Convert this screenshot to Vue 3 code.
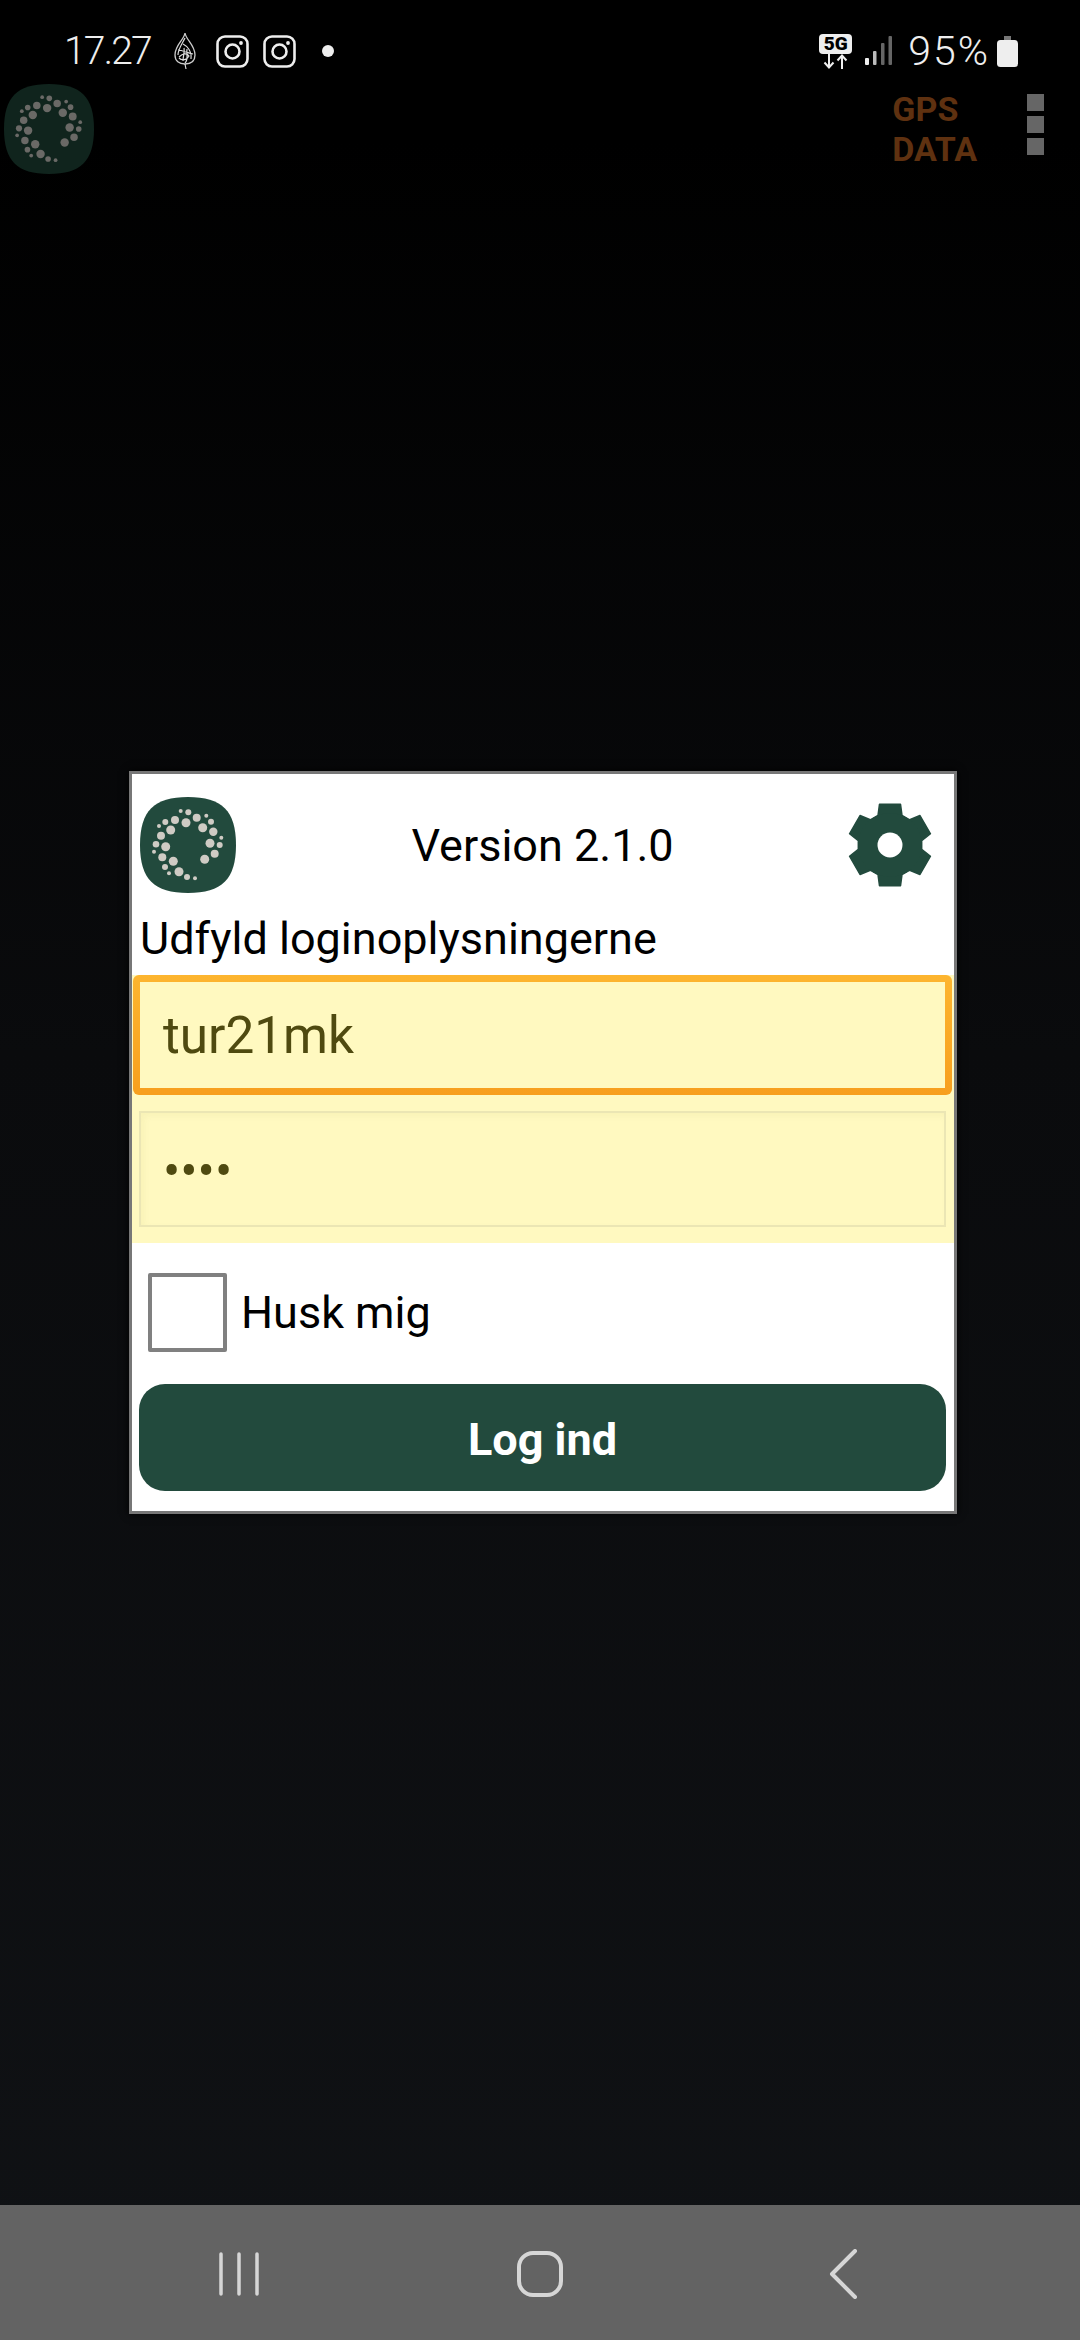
<script setup>
const username = 'tur21mk'
const password = 'test'

// dots of the app logo, in a 96x96 box
const logoDots = [
  [40.7, 14, 2], [48.3, 15.3, 3], [56.7, 20.7, 4], [66.3, 18.7, 2], [71, 24.7, 3],
  [62.7, 30.7, 4.5], [73.3, 34.7, 4.2], [81.3, 40.7, 2], [70, 46.3, 4.5], [79.7, 48, 3],
  [74.7, 56.7, 4], [64.7, 62.3, 4.5], [46, 25.7, 4.5], [35, 23, 4], [25.3, 25, 3],
  [19, 29, 2], [30.7, 33, 4.5], [21, 38.7, 4], [25.7, 49.7, 4.5], [16, 47.3, 3.3],
  [14, 54.7, 2], [22.3, 60.3, 4], [33.3, 64.3, 4.5], [25, 70, 3], [29, 76.3, 2],
  [39, 74.7, 4.5], [47, 80, 3], [55, 81.3, 2],
]

const squircle = 'M48 0C82 0 96 14 96 48C96 82 82 96 48 96C14 96 0 82 0 48C0 14 14 0 48 0Z'

function polar(r, deg) {
  const a = ((deg - 90) * Math.PI) / 180
  return `${(r * Math.cos(a)).toFixed(2)} ${(r * Math.sin(a)).toFixed(2)}`
}

// six-tooth gear around 0,0
const gearPath = (() => {
  let d = ''
  for (let i = 0; i < 6; i++) {
    const c = i * 60
    d += `${i === 0 ? 'M' : 'L'}${polar(32, c - 22)} L${polar(42, c - 14.5)} L${polar(42, c + 14.5)} L${polar(32, c + 22)} `
  }
  return d + 'Z'
})()
</script>

<template>
  <div class="screen">
    <header class="status-bar">
      <div class="status-left">
        <span class="clock">17.27</span>
        <svg class="jazeera" width="24" height="38" viewBox="0 0 24 38">
          <path d="M12 1C13 8 22 13 22 23C22 29 18 32 12 32C6 32 2 29 2 23C2 13 11 8 12 1Z" fill="none" stroke="#ccc" stroke-width="1.3" />
          <path d="M12 6C9 12 5 17 5 23M10 12C14 14 19 19 18 27M6 25C10 21 14 21 16 24C14 28 9 29 6 26M11 16C12 20 10 24 10 29M14 17C13 22 16 27 12 31M12 32L13 37M5 18C9 18 15 21 20 22" fill="none" stroke="#ddd" stroke-width="1.2" />
        </svg>
        <svg v-for="n in 2" :key="n" class="insta" width="33" height="33" viewBox="0 0 33 33">
          <rect x="1.5" y="1.5" width="30" height="30" rx="7.5" fill="none" stroke="#eee" stroke-width="2.6" />
          <circle cx="16.5" cy="16.5" r="7" fill="none" stroke="#eee" stroke-width="2.6" />
          <circle cx="25" cy="8" r="1.9" fill="#eee" />
        </svg>
        <span class="notif-dot"></span>
      </div>
      <div class="status-right">
        <div class="net">
          <span class="net-badge">5G</span>
          <svg width="26" height="15" viewBox="0 0 26 15">
            <path d="M6 0V13M1.5 8.5L6 13.5L10.5 8.5M19 15V2M14.5 6.5L19 1.5L23.5 6.5" fill="none" stroke="#eee" stroke-width="2" />
          </svg>
        </div>
        <svg class="signal" width="28" height="30" viewBox="0 0 28 30">
          <rect x="0" y="22" width="4" height="7" rx="1" fill="#eee" />
          <rect x="8" y="15" width="3.5" height="14" rx="1" fill="#bbb" />
          <rect x="16" y="7" width="3.5" height="22" rx="1" fill="#666" />
          <rect x="23.5" y="0" width="3.5" height="29" rx="1" fill="#666" />
        </svg>
        <span class="battery-text">95%</span>
        <svg width="21" height="31" viewBox="0 0 21 31">
          <path d="M7 0H14V4H7Z" fill="#777" />
          <rect x="0" y="4" width="21" height="27" rx="3.5" fill="#eee" />
        </svg>
      </div>
    </header>

    <div class="app-bar">
      <svg class="app-logo" width="90" height="90" viewBox="0 0 96 96">
        <path :d="squircle" fill="#10241d" />
        <circle v-for="(dot, i) in logoDots" :key="i" :cx="dot[0]" :cy="dot[1]" :r="dot[2]" fill="#6a6966" />
      </svg>
      <div class="gps-label">GPS<br />DATA</div>
      <div class="menu-dots">
        <span></span>
        <span></span>
        <span></span>
      </div>
    </div>

    <main class="content">
      <section class="dialog">
        <div class="dialog-head">
          <svg class="dialog-logo" width="96" height="96" viewBox="0 0 96 96">
            <path :d="squircle" fill="#224a3d" />
            <circle v-for="(dot, i) in logoDots" :key="i" :cx="dot[0]" :cy="dot[1]" :r="dot[2]" fill="#cfcbc4" />
          </svg>
          <div class="version">Version 2.1.0</div>
          <svg class="gear" width="86" height="86" viewBox="-43 -43 86 86">
            <path :d="gearPath" fill="#224a3d" stroke="#224a3d" stroke-width="1.5" stroke-linejoin="round" />
            <circle cx="0" cy="0" r="32" fill="#224a3d" />
            <circle cx="0" cy="0" r="12.5" fill="#fff" />
          </svg>
        </div>
        <div class="prompt">Udfyld loginoplysningerne</div>
        <div class="fields">
          <input class="field field-active" type="text" :value="username" readonly />
          <input class="field field-plain" type="password" :value="password" readonly />
        </div>
        <label class="remember">
          <span class="checkbox"></span>
          <span>Husk mig</span>
        </label>
        <button class="login-btn">Log ind</button>
      </section>
    </main>

    <nav class="nav-bar">
      <svg class="nav-recent" width="40" height="44" viewBox="0 0 40 44">
        <path d="M2 2V42M20 2V42M38 2V42" fill="none" stroke="#d6d6d6" stroke-width="3.5" stroke-linecap="round" />
      </svg>
      <svg class="nav-home" width="46" height="46" viewBox="0 0 46 46">
        <rect x="2" y="2" width="42" height="42" rx="14" fill="none" stroke="#d6d6d6" stroke-width="4" />
      </svg>
      <svg class="nav-back" width="30" height="50" viewBox="0 0 30 50">
        <path d="M26 2L3 25L26 48" fill="none" stroke="#d6d6d6" stroke-width="4" stroke-linecap="round" stroke-linejoin="round" />
      </svg>
    </nav>
  </div>
</template>

<style scoped>
.screen {
  width: 1080px;
  height: 2340px;
  display: flex;
  flex-direction: column;
  background: linear-gradient(180deg, #000000 0%, #000000 6%, #0a0b0d 45%, #101215 100%);
  font-family: Roboto, "Liberation Sans", sans-serif;
  color: #000;
  overflow: hidden;
}

.status-bar {
  height: 84px;
  padding: 30px 62px 0 64px;
  box-sizing: border-box;
  display: flex;
  justify-content: space-between;
  align-items: flex-start;
  color: #eee;
}

.status-left,
.status-right {
  display: flex;
  align-items: center;
  height: 42px;
}

.clock {
  font-size: 39px;
  font-weight: 300;
  letter-spacing: -1.8px;
  margin-right: 22px;
}

.jazeera {
  margin-right: 19px;
}

.insta {
  margin-right: 14px;
}

.notif-dot {
  width: 12px;
  height: 12px;
  border-radius: 50%;
  background: #eee;
  margin-left: 12px;
}

.net {
  display: flex;
  flex-direction: column;
  align-items: center;
  margin-right: 13px;
}

.net-badge {
  width: 33px;
  height: 20px;
  border-radius: 4px;
  background: #eee;
  color: #000;
  font-size: 19px;
  font-weight: 900;
  line-height: 20px;
  text-align: center;
}

.signal {
  margin-right: 15px;
}

.battery-text {
  font-size: 41px;
  font-weight: 300;
  letter-spacing: 2px;
  margin-right: 7px;
}

.app-bar {
  height: 90px;
  display: flex;
  align-items: flex-start;
  padding-left: 4px;
  padding-right: 36px;
}

.app-logo {
  flex: none;
}

.gps-label {
  margin-left: auto;
  margin-right: 50px;
  margin-top: 5px;
  color: #5f3110;
  font-size: 34px;
  font-weight: 700;
  line-height: 40px;
}

.menu-dots {
  display: flex;
  flex-direction: column;
  gap: 5px;
  margin-top: 10px;
}

.menu-dots span {
  width: 17px;
  height: 17px;
  background: #666;
}

.content {
  flex: 1;
  padding-top: 597px;
  padding-left: 129px;
}

.dialog {
  width: 828px;
  height: 743px;
  box-sizing: border-box;
  border: 3px solid #777;
  background: #fff;
  box-shadow: 0 0 8px #000;
}

.dialog-head {
  display: grid;
  grid-template-columns: 130px 1fr 130px;
  align-items: center;
  padding: 23px 21px 0 8px;
}

.version {
  text-align: center;
  font-size: 45px;
  padding-left: 12px;
  padding-top: 1px;
}

.gear {
  justify-self: end;
}

.prompt {
  font-size: 45px;
  line-height: 52px;
  padding-left: 8px;
  margin-top: 20px;
}

.fields {
  background: #fff9c0;
  padding-bottom: 16px;
  margin-top: 10px;
}

.field {
  display: block;
  box-sizing: border-box;
  font-family: Roboto, "Liberation Sans", sans-serif;
  font-size: 51.3px;
  color: #4f4a10;
  background: #fff9c0;
  outline: none;
  padding: 0;
}

.field-active {
  width: 819px;
  height: 120px;
  margin-left: 1px;
  border: 7px solid transparent;
  border-radius: 6px;
  padding-left: 23px;
  background: linear-gradient(#fff9c0, #fff9c0) padding-box, linear-gradient(#fdb52f, #f79f1e) border-box;
}

.field-plain {
  width: 807px;
  height: 116px;
  margin-left: 7px;
  margin-top: 16px;
  border: 2px solid #ebe6b4;
  padding-left: 22px;
  padding-top: 4px;
  box-shadow: inset 3px 3px 6px rgba(120, 110, 0, 0.05);
}

.remember {
  display: flex;
  align-items: center;
  font-size: 45px;
  height: 141px;
  box-sizing: border-box;
  padding-left: 16px;
  padding-bottom: 2px;
  gap: 14px;
}

.checkbox {
  width: 79px;
  height: 79px;
  box-sizing: border-box;
  border: 4px solid #808080;
  border-radius: 2px;
}

.login-btn {
  display: block;
  width: 807px;
  height: 107px;
  margin-left: 7px;
  padding-top: 4px;
  border: none;
  border-radius: 26px;
  background: #224a3d;
  color: #fff;
  font-family: Roboto, "Liberation Sans", sans-serif;
  font-size: 45px;
  font-weight: 700;
}

.nav-bar {
  height: 135px;
  box-sizing: border-box;
  background: #636363;
  display: flex;
  align-items: center;
  flex: none;
  padding-top: 3px;
  padding-left: 219px;
}

.nav-home {
  margin-left: 258px;
}

.nav-back {
  margin-left: 266px;
}
</style>

<style>
html,
body {
  background: #000;
}
</style>
